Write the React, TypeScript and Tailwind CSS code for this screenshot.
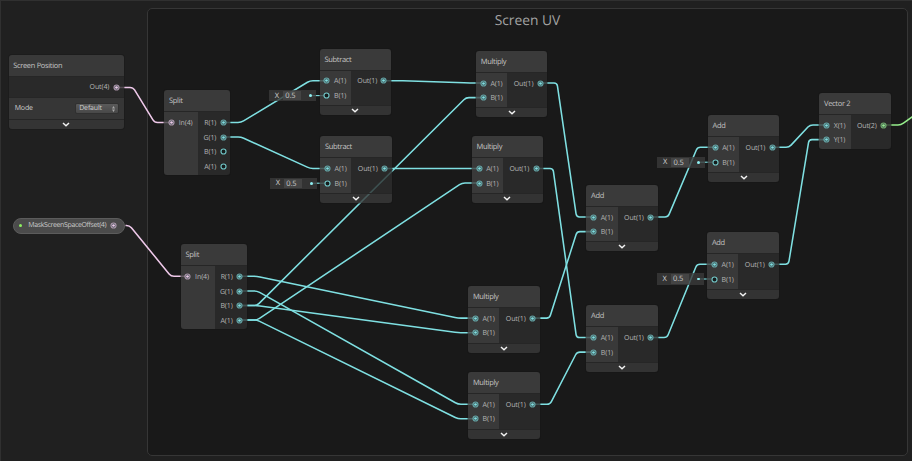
import React from 'react';

type Pt = [number, number];
const TEAL = '#7fe0e2';
const PINK = '#efc9ea';
const GREEN = '#96ee8c';

const wires: { c: string; p: Pt[] }[] = [
  { c: PINK, p: [[116.5, 87.4], [133, 87.4], [154.5, 122.5], [171.7, 122.5]] },
  { c: PINK, p: [[125.5, 225.4], [129.5, 225.4], [171, 276.3], [188, 276.3]] },
  { c: TEAL, p: [[223.3, 122.5], [241, 122.5], [310, 80.7], [327, 80.7]] },
  { c: TEAL, p: [[223.3, 137], [241, 137], [310, 168.4], [327.5, 168.4]] },
  { c: TEAL, p: [[384, 80.7], [400, 80.7], [467, 82.9], [483, 82.9]] },
  { c: TEAL, p: [[384.5, 168.4], [479, 168.4]] },
  { c: TEAL, p: [[540.3, 82.9], [557, 82.9], [576.5, 216.9], [593.5, 216.9]] },
  { c: TEAL, p: [[536, 168.4], [553, 168.4], [576.5, 337.5], [593.5, 337.5]] },
  { c: TEAL, p: [[532.3, 318.1], [549.5, 318.1], [577, 231.6], [593.5, 231.6]] },
  { c: TEAL, p: [[532.3, 404.2], [550, 404.2], [577, 352.1], [593.5, 352.1]] },
  { c: TEAL, p: [[650.6, 216.9], [668, 216.9], [697.5, 147.3], [715, 147.3]] },
  { c: TEAL, p: [[650.6, 337.5], [667, 337.5], [697, 264.2], [714.3, 264.2]] },
  { c: TEAL, p: [[772, 147.3], [789, 147.3], [810, 124.9], [826.5, 124.9]] },
  { c: TEAL, p: [[771.3, 264.2], [788.5, 264.2], [809, 139.6], [826.5, 139.6]] },
  { c: GREEN, p: [[883.5, 124.9], [901, 124.9], [914, 115.5]] },
  { c: TEAL, p: [[239.7, 276.3], [257, 276.3], [458, 318.1], [475.3, 318.1]] },
  { c: TEAL, p: [[239.7, 290.9], [257, 290.9], [458, 404.2], [475.3, 404.2]] },
  { c: TEAL, p: [[239.7, 305.5], [257, 305.5], [466, 97.6], [483, 97.6]] },
  { c: TEAL, p: [[239.7, 305.5], [257, 305.5], [458, 332.7], [475.3, 332.7]] },
  { c: TEAL, p: [[239.7, 320], [257, 320], [462, 183], [479, 183]] },
  { c: TEAL, p: [[239.7, 320], [257, 320], [458, 418.8], [475.3, 418.8]] },
];

// Polyline with softened corners.
function rounded(p: Pt[]) {
  let d = `M${p[0][0]} ${p[0][1]}`;
  for (let i = 1; i < p.length - 1; i++) {
    const at = (q: Pt) => {
      const dx = q[0] - p[i][0];
      const dy = q[1] - p[i][1];
      const k = 3 / Math.hypot(dx, dy);
      return `${p[i][0] + dx * k} ${p[i][1] + dy * k}`;
    };
    d += `L${at(p[i - 1])}Q${p[i][0]} ${p[i][1]} ${at(p[i + 1])}`;
  }
  const e = p[p.length - 1];
  return d + `L${e[0]} ${e[1]}`;
}

function Port({ color = TEAL, open = false }: { color?: string; open?: boolean }) {
  return (
    <svg className="block size-[7px] shrink-0" viewBox="0 0 7 7">
      <circle cx="3.5" cy="3.5" r="2.5" fill={open ? '#151c1c' : '#3a4a4b'} stroke={color} strokeWidth="1.15" strokeOpacity={open ? 0.85 : 0.62} />
      {!open && <circle cx="3.5" cy="3.5" r="1.35" fill={color} />}
    </svg>
  );
}

function Fold() {
  return (
    <div className="flex h-[10px] items-center justify-center border-t border-[#262626] bg-[#3a3a3a]/80">
      <svg className="block h-[5px] w-[8px]" viewBox="0 0 8 5">
        <path d="M1 1 L4 3.7 L7 1" fill="none" stroke="#f2f2f2" strokeWidth="1.5" />
      </svg>
    </div>
  );
}

type PortDef = { label: string; open?: boolean; color?: string };

function Node(props: {
  x: number; y: number; w?: number; inW?: number; title: string;
  ins: PortDef[]; outs: PortDef[]; fold?: boolean; tall?: boolean;
}) {
  const { x, y, w = 71.4, inW = 31.3, title, ins, outs, fold = true, tall = false } = props;
  return (
    <div className="absolute flex flex-col overflow-hidden rounded-[3px] ring-1 ring-[#141414]/30" style={{ left: x, top: y, width: w }}>
      <div className="h-[22px] border-b border-[#262626] bg-[#424242]/80 pl-[4.7px] text-[7.5px] leading-[23px] tracking-[-0.3px] text-[#c4c4c4]">{title}</div>
      <div className={tall ? 'flex h-[63px]' : 'flex h-[34.5px]'}>
        <div className="flex flex-col bg-[#414141]/80 pt-[3px] pl-[3.8px]" style={{ width: inW }}>
          {ins.map((p) => (
            <div key={p.label} className="flex h-[14.6px] items-center gap-[3.6px]">
              <Port {...p} />
              <span className="pt-[2px] text-[7px] leading-[13px] tracking-[-0.1px] text-[#b6b6b6]">{p.label}</span>
            </div>
          ))}
        </div>
        <div className="flex flex-1 flex-col items-end bg-[#2d2d2d]/80 pt-[3px] pr-[3.6px]">
          {outs.map((p) => (
            <div key={p.label} className="flex h-[14.6px] items-center gap-[3.4px]">
              <span className="pt-[2px] text-[7px] leading-[13px] tracking-[-0.1px] text-[#b6b6b6]">{p.label}</span>
              <Port {...p} />
            </div>
          ))}
        </div>
      </div>
      {fold && <Fold />}
    </div>
  );
}

function Chip({ x, y }: { x: number; y: number }) {
  return (
    <div className="absolute flex h-[11.5px] w-[47.7px] items-center bg-[#3a3a3a]/80 pl-[6px] text-[7.5px] leading-[11px] text-[#cecece]" style={{ left: x, top: y }}>
      <span className="w-[8px] pt-[1px]">X</span>
      <span className="h-[9.5px] w-[18px] bg-[#484848]/80 pl-[2.5px] leading-[10px] tracking-[-0.15px]">0.5</span>
      <span className="ml-[8.3px] size-[2.8px] rounded-full bg-[#8ff0f2]" />
    </div>
  );
}

const AB: PortDef[] = [{ label: 'A(1)' }, { label: 'B(1)' }];
const AOpenB: PortDef[] = [{ label: 'A(1)' }, { label: 'B(1)', open: true }];
const OUT: PortDef[] = [{ label: 'Out(1)' }];

const chips: Pt[] = [[268.8, 89.9], [269.8, 177.5], [657, 156.5], [656.5, 273.3]];

export default function App() {
  return (
    <div className="relative h-[461px] w-[912px] overflow-hidden border-t border-l border-[#303030] bg-[#202020] font-['Open_Sans','Noto_Sans',sans-serif] [text-rendering:geometricPrecision]">
      <div className="absolute -top-px -left-px h-[461px] w-[912px]">
        <div className="absolute top-[8px] left-[147px] h-[448px] w-[761px] rounded-[5px] border border-[#363636] bg-[#191919] text-center">
          <div className="pt-[2px] text-[13.8px] leading-[20px] text-[#a3a3a3]">Screen UV</div>
        </div>

        <svg className="absolute inset-0" width="912" height="461" viewBox="0 0 912 461">
          {wires.map((w, i) => (
            <path key={i} d={rounded(w.p)} fill="none" stroke={w.c} strokeWidth="1.55" />
          ))}
          {chips.map(([x, y], i) => (
            <path key={i} d={`M${x + 42} ${y + 5.7}H${x + 55}`} stroke={TEAL} strokeWidth="1.1" />
          ))}
        </svg>

        <div className="absolute top-[55.3px] left-[8.7px] flex w-[115px] flex-col overflow-hidden rounded-[3px] ring-1 ring-[#141414]/30">
          <div className="h-[22px] border-b border-[#262626] bg-[#404040]/80 pl-[4.5px] text-[7.4px] leading-[23px] tracking-[-0.27px] text-[#c4c4c4]">Screen Position</div>
          <div className="flex h-[20px] items-center justify-end gap-[3.6px] bg-[#2c2c2c]/80 pr-[3.8px] text-[7px] text-[#b6b6b6]">
            <span className="pt-[2px] tracking-[-0.1px]">Out(4)</span>
            <Port color={PINK} />
          </div>
          <div className="flex h-[21.5px] items-center justify-between border-t border-[#262626] bg-[#3c3c3c]/80 pr-[5px] pl-[6px] text-[7px] text-[#cecece]">
            <span className="pt-[1.5px] tracking-[-0.15px]">Mode</span>
            <span className="flex h-[10.5px] w-[43.5px] items-center justify-between rounded-[2px] border border-[#303030] bg-linear-to-b from-[#5a5a5a] to-[#484848] pr-[3px] pl-[3px] leading-none tracking-[-0.15px]">
              Default
              <svg className="h-[6px] w-[3px]" viewBox="0 0 3 6">
                <path d="M1.5 0L3 2.4H0ZM1.5 6L3 3.6H0Z" fill="#a8a8a8" />
              </svg>
            </span>
          </div>
          <Fold />
        </div>

        <div className="absolute top-[217.5px] left-[13.3px] flex h-[16px] w-[112px] items-center rounded-full border border-[#5c5c5c] bg-[#4b4b4b] pl-[4.5px] text-[7px] text-[#c8c8c8]">
          <span className="size-[3px] shrink-0 rounded-full bg-[#8cf060]" />
          <span className="ml-[6.5px] w-[81.5px] shrink-0 pt-[1px] tracking-[-0.37px] whitespace-nowrap">MaskScreenSpaceOffset(4)</span>
          <Port color={PINK} />
        </div>

        <Node x={164.3} y={90.3} w={66} inW={34} title="Split" tall fold={false}
          ins={[{ label: 'In(4)', color: PINK }]}
          outs={[{ label: 'R(1)' }, { label: 'G(1)' }, { label: 'B(1)', open: true }, { label: 'A(1)', open: true }]} />
        <Node x={180.7} y={244.3} w={66} inW={34} title="Split" tall fold={false}
          ins={[{ label: 'In(4)', color: PINK }]}
          outs={[{ label: 'R(1)' }, { label: 'G(1)' }, { label: 'B(1)' }, { label: 'A(1)' }]} />
        <Node x={319.7} y={48.5} title="Subtract" ins={AOpenB} outs={OUT} />
        <Node x={320.2} y={136.3} title="Subtract" ins={AOpenB} outs={OUT} />
        <Node x={476} y={50.8} title="Multiply" ins={AB} outs={OUT} />
        <Node x={471.8} y={136.3} title="Multiply" ins={AB} outs={OUT} />
        <Node x={468.2} y={286} title="Multiply" ins={AB} outs={OUT} />
        <Node x={468.2} y={372.1} title="Multiply" ins={AB} outs={OUT} />
        <Node x={586.4} y={184.8} title="Add" ins={AB} outs={OUT} />
        <Node x={586.4} y={305.4} title="Add" ins={AB} outs={OUT} />
        <Node x={707.9} y={115.2} title="Add" ins={AOpenB} outs={OUT} />
        <Node x={707.2} y={232.2} title="Add" ins={AOpenB} outs={OUT} />
        <Node x={819.3} y={92.8} title="Vector 2" fold={false}
          ins={[{ label: 'X(1)' }, { label: 'Y(1)' }]} outs={[{ label: 'Out(2)', color: GREEN }]} />

        {chips.map(([x, y], i) => (
          <Chip key={i} x={x} y={y} />
        ))}
      </div>
    </div>
  );
}
